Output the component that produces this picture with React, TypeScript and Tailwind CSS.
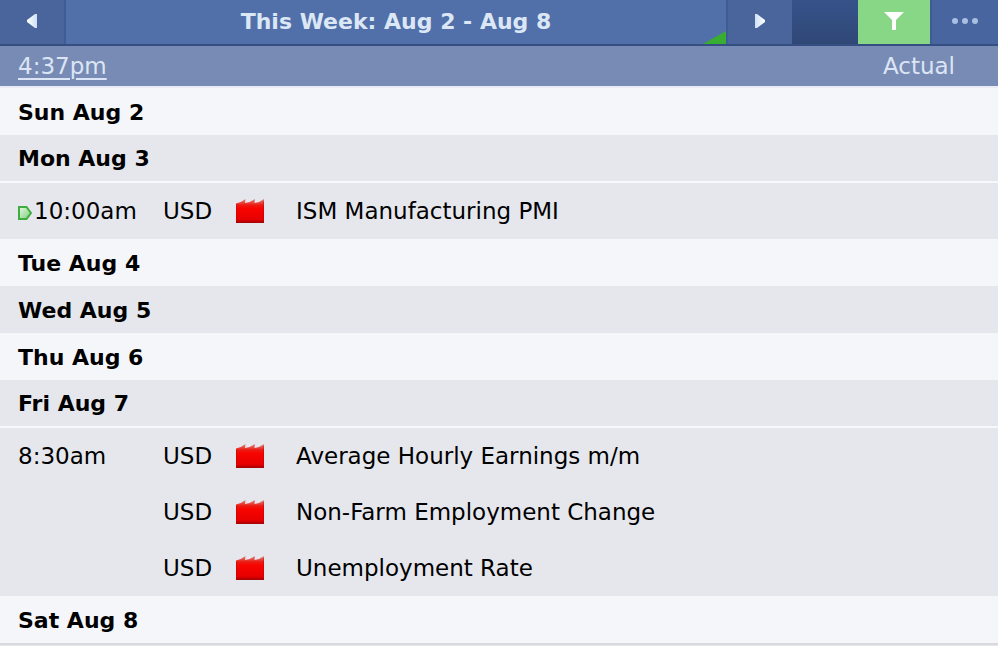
import { useState } from "react"

type CalendarEvent = { time: string; currency: string; name: string; upNext?: boolean }
type Day = { label: string; events: CalendarEvent[] }

const DAYS: Day[] = [
  { label: "Sun Aug 2", events: [] },
  { label: "Mon Aug 3", events: [{ time: "10:00am", currency: "USD", name: "ISM Manufacturing PMI", upNext: true }] },
  { label: "Tue Aug 4", events: [] },
  { label: "Wed Aug 5", events: [] },
  { label: "Thu Aug 6", events: [] },
  {
    label: "Fri Aug 7",
    events: [
      { time: "8:30am", currency: "USD", name: "Average Hourly Earnings m/m" },
      { time: "", currency: "USD", name: "Non-Farm Employment Change" },
      { time: "", currency: "USD", name: "Unemployment Rate" },
    ],
  },
  { label: "Sat Aug 8", events: [] },
]

function ArrowIcon({ flipped = false }: { flipped?: boolean }) {
  const gradientId = flipped ? "arrow-next" : "arrow-prev"
  return (
    <svg className={`w-[10px] h-[14px] ${flipped ? "rotate-180" : ""}`} viewBox="0 0 10 14">
      <defs>
        <linearGradient id={gradientId} x1="0" y1="0" x2="1" y2="0">
          <stop offset="0" stopColor="#ffffff" />
          <stop offset="1" stopColor="#cfe1f8" />
        </linearGradient>
      </defs>
      <path d="M10 0v14H8L0 8V6l8-6z" fill={`url(#${gradientId})`} />
    </svg>
  )
}

function UpNextIcon() {
  return (
    <svg className="w-[14px] h-[14px] mr-[2px] mt-[3px] shrink-0" viewBox="0 0 14 14" role="img" aria-label="Up next">
      <defs>
        <linearGradient id="up-next" x1="0" y1="0" x2="1" y2="1">
          <stop offset="0" stopColor="#e6f8e4" />
          <stop offset="1" stopColor="#7ccd78" />
        </linearGradient>
      </defs>
      <path d="M1 1h7.500L13 7l-4.500 6H1z" fill="url(#up-next)" stroke="#41ad3f" strokeWidth="2" />
    </svg>
  )
}

function ImpactIcon() {
  return (
    <svg className="block w-[28px] h-[24px]" viewBox="0 0 28 24" role="img" aria-label="High impact">
      <defs>
        <linearGradient id="impact" x1="0" y1="0" x2="0" y2="1">
          <stop offset="0" stopColor="#dc8a82" />
          <stop offset="0.250" stopColor="#ec1a12" />
          <stop offset="0.400" stopColor="#f80400" />
          <stop offset="0.850" stopColor="#e60000" />
          <stop offset="1" stopColor="#a00000" />
        </linearGradient>
      </defs>
      <path d="M0 24V4.500Q5 3.500 9.500 0L9 4Q14 3.500 19 0L18.500 4Q23.500 3.500 28 0V24z" fill="url(#impact)" />
      <path d="M.5 5v18.500h27V2" fill="none" stroke="#a30b08" strokeOpacity="0.4" />
    </svg>
  )
}

function EventRow({ event }: { event: CalendarEvent }) {
  return (
    <tr className="h-14">
      <td className="pl-[18px]">
        <div className="flex items-center">
          {event.upNext && <UpNextIcon />}
          {event.time}
        </div>
      </td>
      <td>{event.currency}</td>
      <td><ImpactIcon /></td>
      <td>{event.name}</td>
      <td />
    </tr>
  )
}

function DayGroup({ day, striped }: { day: Day; striped: boolean }) {
  const hasEvents = day.events.length > 0
  return (
    <tbody className={striped ? "bg-[#e6e7ec]" : "bg-[#f5f6fa]"}>
      <tr className={hasEvents ? "h-12" : "h-[47px]"}>
        <th scope="rowgroup" colSpan={5} className={`pl-[18px] pt-[2px] text-left text-[22px] font-bold ${hasEvents ? "border-b-2 border-[#f7f8fb]" : ""}`}>
          {day.label}
        </th>
      </tr>
      {day.events.map((event) => <EventRow key={event.name} event={event} />)}
    </tbody>
  )
}

export default function App() {
  const [filtered, setFiltered] = useState(true)

  return (
    <div className="min-h-screen bg-[#e6e7ec] text-[23px] leading-7 text-black font-['DejaVu_Sans',Verdana,sans-serif]">
      <nav className="flex h-[46px] border-b-2 border-[#354f82] bg-[#5170aa]">
        <button type="button" aria-label="Previous week" className="flex w-[66px] shrink-0 items-center justify-center border-r-2 border-[#3e5c96] bg-[#4a659b] pb-[2px]">
          <ArrowIcon />
        </button>
        <button type="button" className="relative flex-1 border-r-2 border-[#3e5c96] text-[22px] font-bold text-[#dce7f6]">
          This Week: Aug 2 - Aug 8
          <svg className="absolute right-0 bottom-0 w-[23px] h-[13px]" viewBox="0 0 23 13">
            <path d="M23 0v13H0z" fill="#38ad30" />
          </svg>
        </button>
        <button type="button" aria-label="Next week" className="flex w-16 shrink-0 items-center justify-center bg-[#4a659b] pb-[2px]">
          <ArrowIcon flipped />
        </button>
        <div className="w-[66px] shrink-0 bg-gradient-to-b from-[#36528a] to-[#2f4876]" />
        <button
          type="button"
          aria-label="Filter"
          aria-pressed={filtered}
          onClick={() => setFiltered((v) => !v)}
          className={`flex w-[72px] shrink-0 items-center justify-center pb-[2px] ${filtered ? "bg-[#87d787]" : "bg-[#4a659b]"}`}
        >
          <svg className="w-5 h-[18px]" viewBox="0 0 20 18">
            <path d="M0 0h20l-8 8v10H8V8z" fill="#ffffff" />
          </svg>
        </button>
        <button type="button" aria-label="More options" className="flex w-[68px] shrink-0 items-center justify-center border-l-2 border-[#3e5c96] bg-[#4865a0] pb-[2px]">
          <svg className="w-[26px] h-[6px]" viewBox="0 0 26 6" fill="#a9bee3">
            <circle cx="3" cy="3" r="3" />
            <circle cx="13" cy="3" r="3" />
            <circle cx="23" cy="3" r="3" />
          </svg>
        </button>
      </nav>

      <table className="w-full table-fixed border-separate border-spacing-0 border-b-2 border-[#d8dade]">
        <colgroup>
          <col className="w-[163px]" />
          <col className="w-[73px]" />
          <col className="w-[60px]" />
          <col />
          <col className="w-[156px]" />
        </colgroup>
        <thead className="bg-[#778bb4] text-[#dce5f5]">
          <tr className="h-[42px]">
            <th scope="col" colSpan={4} className="border-b-2 border-[#e9ecf4] pl-[18px] text-left font-normal">
              <a href="#time" className="underline decoration-2 underline-offset-4">4:37pm</a>
            </th>
            <th scope="col" className="border-b-2 border-[#e9ecf4] pr-[43px] text-right font-normal">Actual</th>
          </tr>
        </thead>
        {DAYS.map((day, i) => <DayGroup key={day.label} day={day} striped={i % 2 === 1} />)}
      </table>
    </div>
  )
}
